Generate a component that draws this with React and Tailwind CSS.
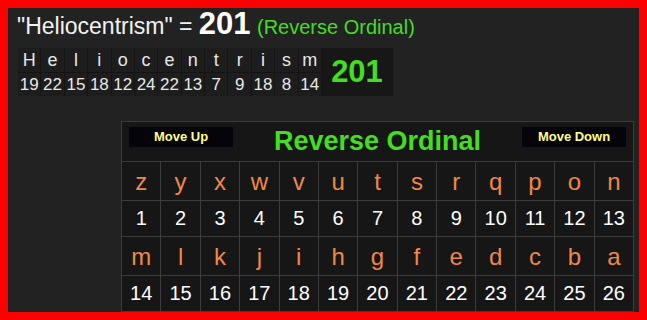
import React from 'react';

const word = [
  ['H', 19], ['e', 22], ['l', 15], ['i', 18], ['o', 12], ['c', 24], ['e', 22],
  ['n', 13], ['t', 7], ['r', 9], ['i', 18], ['s', 8], ['m', 14],
];

const rowA = 'zyxwvutsrqpon'.split('');
const rowB = 'mlkjihgfedcba'.split('');

const App = () => {
  return (
    <div className="w-[647px] h-[320px] overflow-hidden border-8 border-[#ff0000] bg-[#222222] font-['Liberation_Sans',Arial,sans-serif]">
      {/* Title line */}
      <div className="mt-[1px] pl-[9px] leading-[30px] text-[23px] text-[#f2f2f2] whitespace-nowrap">
        "Heliocentrism" = <span className="text-[31px] font-bold text-white">201</span>{' '}
        <span className="text-[20px] text-[#44dd22]">(Reverse Ordinal)</span>
      </div>

      {/* Word breakdown */}
      <div className="mt-[6px] ml-[10px] flex w-[375px] h-[48px] bg-[#171717]">
        <div className="grid grid-cols-[repeat(13,minmax(0,1fr))] grid-rows-2 gap-px bg-[#141414] w-[303px]">
          {word.map(([l], i) => (
            <div key={'l' + i} className="bg-[#1d1d1d] text-center text-[18px] leading-[24px] text-[#e8e8e8]">{l}</div>
          ))}
          {word.map(([, n], i) => (
            <div key={'n' + i} className="bg-[#1d1d1d] text-center text-[17px] leading-[23px] text-[#e8e8e8]">{n}</div>
          ))}
        </div>
        <div className="flex-1 flex items-center justify-center text-[31px] font-bold text-[#44dd22]">201</div>
      </div>

      {/* Cipher table */}
      <div className="mt-[25px] ml-[113px] w-[513px] border border-[#3c3c3c] bg-[#161616]">
        <div className="grid grid-cols-[104px_1fr_104px] h-[40px] px-[7px] border-b border-[#3c3c3c]">
          <div className="mt-[5px] h-[20px] bg-[#04040a] flex items-center justify-center text-[13px] font-bold text-[#ffff88]">Move Up</div>
          <div className="pt-[6px] text-center text-[27px] leading-[27px] font-bold text-[#44dd22]">Reverse Ordinal</div>
          <div className="mt-[5px] h-[20px] bg-[#04040a] flex items-center justify-center text-[13px] font-bold text-[#ffff88]">Move Down</div>
        </div>
        <div className="grid grid-cols-[repeat(13,minmax(0,1fr))] gap-px bg-[#3c3c3c]">
          {rowA.map((c) => (
            <div key={c} className="bg-[#161616] h-[38px] text-center text-[24px] leading-[39px] text-[#f08848]">{c}</div>
          ))}
          {rowA.map((c, i) => (
            <div key={'a' + c} className="bg-[#161616] h-[35px] text-center text-[20px] leading-[35px] text-white">{i + 1}</div>
          ))}
          {rowB.map((c) => (
            <div key={c} className="bg-[#161616] h-[38px] text-center text-[24px] leading-[39px] text-[#f08848]">{c}</div>
          ))}
          {rowB.map((c, i) => (
            <div key={'b' + c} className="bg-[#161616] h-[35px] text-center text-[20px] leading-[35px] text-white">{i + 14}</div>
          ))}
        </div>
      </div>
    </div>
  );
};

export default App;
